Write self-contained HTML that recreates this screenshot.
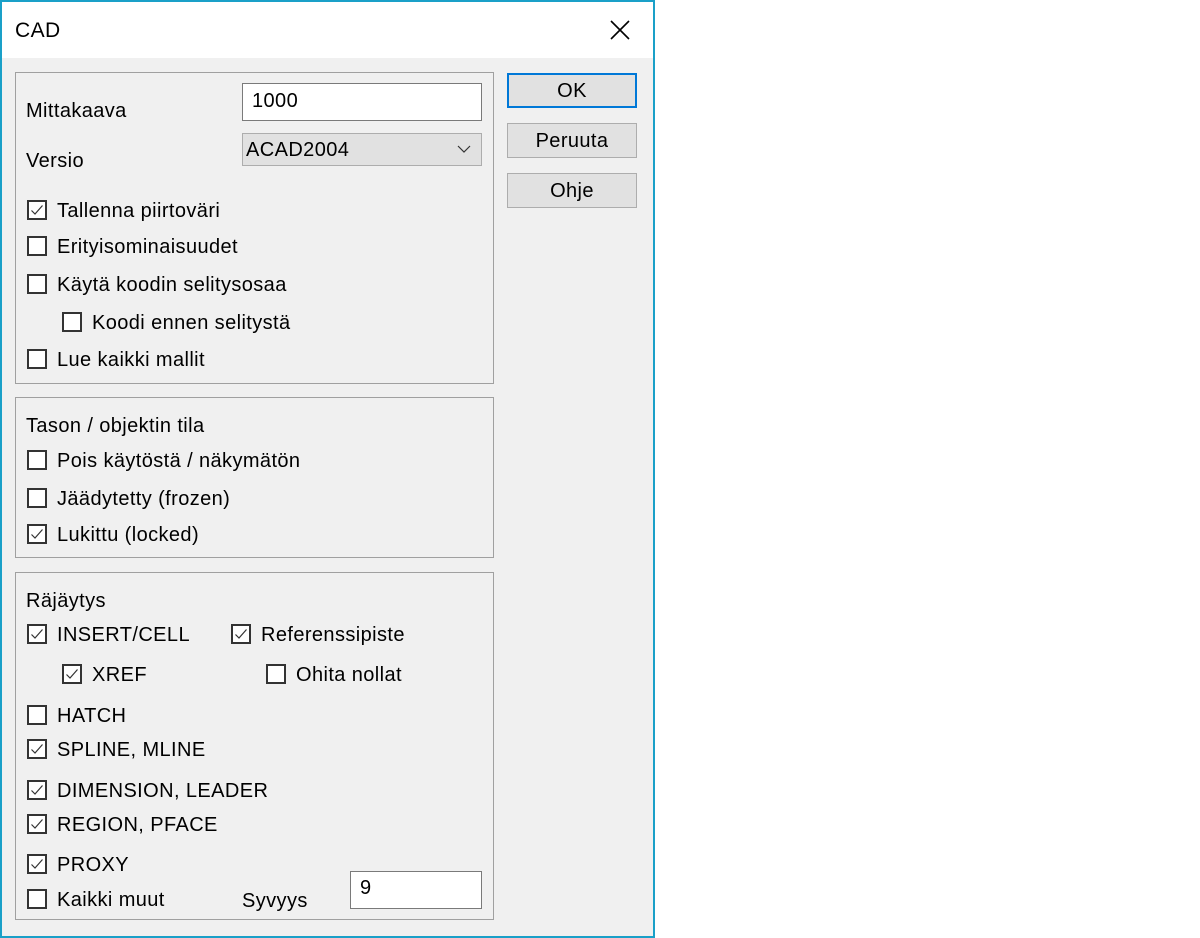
<!DOCTYPE html>
<html><head><meta charset="utf-8"><style>
body{margin:0;width:1200px;height:938px;background:#fff;position:relative;font-family:"Liberation Sans",sans-serif;font-size:20px;letter-spacing:0.4px;color:#000;overflow:hidden}
.dlg{position:absolute;left:0;top:0;width:651px;height:934px;border:2px solid #1aa0c8;background:#f0f0f0}
.title{position:absolute;left:0;top:0;width:651px;height:56px;background:#fff}
.a{position:absolute;white-space:nowrap}
.g{position:absolute;border:1px solid #a0a0a0;box-sizing:border-box}
.btn{position:absolute;left:507px;width:130px;height:35px;box-sizing:border-box;border:1px solid #adadad;background:#e1e1e1;text-align:center;line-height:33px}
.cb{position:absolute;width:20px;height:20px;box-sizing:border-box;border:2px solid #333;background:#fff}
.lb{position:absolute;white-space:nowrap;line-height:22px}
.in{position:absolute;box-sizing:border-box;border:1px solid #7a7a7a;background:#fff;padding-left:9px}
</style></head><body>
<div class="dlg"></div>
<div class="title" style="left:2px;top:2px"></div>
<div class="a" style="left:15px;top:19px;font-size:21px">CAD</div>
<svg class="a" style="left:610px;top:20px" width="20" height="20"><path d="M1 1L19 19M19 1L1 19" stroke="#000" stroke-width="1.6"/></svg>
<div class="g" style="left:15px;top:72px;width:479px;height:312px"></div>
<div class="g" style="left:15px;top:397px;width:479px;height:161px"></div>
<div class="g" style="left:15px;top:572px;width:479px;height:348px"></div>
<div class="btn" style="top:73px;border:2px solid #0078d7;line-height:33px">OK</div>
<div class="btn" style="top:123px;line-height:35px">Peruuta</div>
<div class="btn" style="top:173px;line-height:35px">Ohje</div>
<div class="lb" style="left:26px;top:100px">Mittakaava</div>
<div class="in" style="left:242px;top:83px;width:240px;height:38px;line-height:34px">1000</div>
<div class="lb" style="left:26px;top:150px">Versio</div>
<div class="a" style="left:242px;top:133px;width:240px;height:33px;box-sizing:border-box;border:1px solid #adadad;background:#e1e1e1;padding-left:3px;line-height:33px">ACAD2004</div>
<svg class="a" style="left:457px;top:145px" width="14" height="9"><path d="M1 1L7 7L13 1" stroke="#333" fill="none" stroke-width="1.2"/></svg>
<div class="lb" style="left:26px;top:415px">Tason / objektin tila</div>
<div class="lb" style="left:26px;top:590px">Räjäytys</div>
<div class="lb" style="left:242px;top:890px">Syvyys</div>
<div class="in" style="left:350px;top:871px;width:132px;height:38px;line-height:32px">9</div>
<div id="cbs"></div>
<script>
var c=[[27,210,"Tallenna piirtoväri",1],[27,246,"Erityisominaisuudet",0],[27,284,"Käytä koodin selitysosaa",0],[62,322,"Koodi ennen selitystä",0],[27,359,"Lue kaikki mallit",0],[27,460,"Pois käytöstä / näkymätön",0],[27,498,"Jäädytetty (frozen)",0],[27,534,"Lukittu (locked)",1],[27,634,"INSERT/CELL",1],[231,634,"Referenssipiste",1],[62,674,"XREF",1],[266,674,"Ohita nollat",0],[27,715,"HATCH",0],[27,749,"SPLINE, MLINE",1],[27,790,"DIMENSION, LEADER",1],[27,824,"REGION, PFACE",1],[27,864,"PROXY",1],[27,899,"Kaikki muut",0]];
var h="";c.forEach(function(e){h+='<div class="cb" style="left:'+e[0]+'px;top:'+(e[1]-10)+'px">'+(e[3]?'<svg width="16" height="16" style="position:absolute;left:0;top:0"><path d="M2.5 8.5L6 12L13.5 3.5" stroke="#333" fill="none" stroke-width="1.2"/></svg>':'')+'</div><div class="lb" style="left:'+(e[0]+30)+'px;top:'+(e[1]-10)+'px">'+e[2]+'</div>';});
document.getElementById("cbs").innerHTML=h;
</script>
</body></html>
